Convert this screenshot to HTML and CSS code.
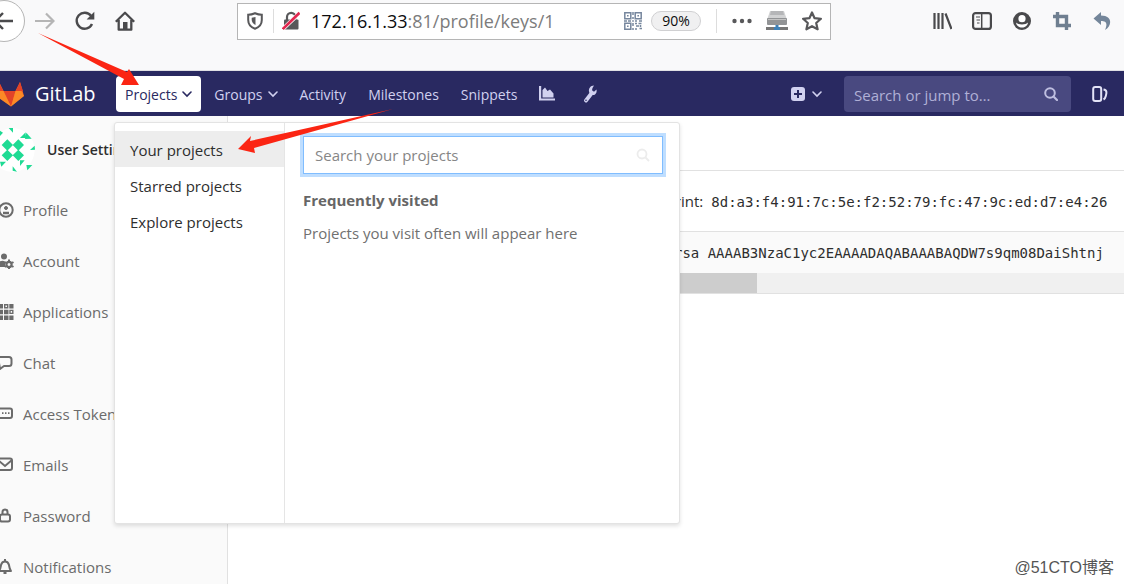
FILE: index.html
```html
<!DOCTYPE html>
<html lang="en">
<head>
<meta charset="utf-8">
<title>User Settings · GitLab</title>
<link rel="stylesheet" href="styles.css">
</head>
<body>
<header class="browser">
  <button class="tool back" aria-label="Back"><svg width="26" height="44" viewBox="0 0 26 44"><circle cx="4" cy="22" r="20.500" fill="#fff" stroke="#b5b5b5"/><path d="M-4 22H13M3 14l-8 8 8 8" fill="none" stroke="#4a4a4c" stroke-width="2.400"/></svg></button>
  <button class="tool" aria-label="Forward"><svg width="20" height="20" viewBox="0 0 20 20"><path d="M0 10h18M11 2.500l7.500 7.500-7.500 7.500" fill="none" stroke="#b5b5b5" stroke-width="2.200"/></svg></button>
  <button class="tool" aria-label="Reload"><svg width="20" height="20" viewBox="0 0 20 20"><path d="M16 4.800A8 8 0 1 0 17 13" fill="none" stroke="#4a4a4c" stroke-width="2.400"/><path d="M19.300 .8v7.700h-7.700z" fill="#4a4a4c"/></svg></button>
  <button class="tool" aria-label="Home"><svg width="20" height="20" viewBox="0 0 20 20"><path d="M.8 10.800L10 1.800l9.200 9M3.700 9v9.700h12.600V9" fill="none" stroke="#4a4a4c" stroke-width="2.300" stroke-linejoin="round"/><path d="M8 19v-8h4.500v8z" fill="#4a4a4c"/></svg></button>
  <div class="urlbar">
    <svg width="16" height="18" viewBox="0 0 16 18"><path d="M8 1.200C5.500 2.200 3 2.700 1.200 2.800V8c0 4.300 3 7.300 6.800 8.700 3.800-1.400 6.800-4.400 6.800-8.700V2.800C13 2.700 10.500 2.200 8 1.200z" fill="none" stroke="#58585a" stroke-width="2"/><path d="M8.500 5v8C6 11.800 4.700 10 4.700 7.500V5.800z" fill="#58585a"/></svg>
    <span class="sep"></span>
    <svg width="18" height="20" viewBox="0 0 18 20"><path d="M5 9V6a4.200 4.200 0 0 1 8.400 0v3" fill="none" stroke="#58585a" stroke-width="2.200"/><rect x="2" y="8.500" width="14.500" height="10" rx="1" fill="#58585a"/><path d="M.8 18L17.500 2.300" stroke="#fff" stroke-width="4"/><path d="M.8 18L17.500 1.800" stroke="#e22850" stroke-width="2.600"/></svg>
    <span class="url" role="textbox" aria-label="Address"><span class="host">172.16.1.33</span>:81/profile/keys/1</span>
    <svg class="qr" width="18" height="18" viewBox="0 0 18 18" fill="none" stroke="#76869d" stroke-width="1.500"><path d="M.8.8h6v6h-6zM11.200.8h6v6h-6zM.8 11.200h6v6h-6z"/><path d="M3 3.800h1.600M13.400 3.800H15M3 14.200h1.600M8.200 9h1.600M9 0v3M9 5v2M0 9h3M4 9h3M11 9h2M15 9h3M9 11v3M9 16v2M11 11.500h2M14.500 11.500h3M12 14h3M11 17h2M15.500 16.500h2.500M16.500 13v2"/></svg>
    <button class="zoom">90%</button>
    <span class="sep tall"></span>
    <svg class="dots" width="20" height="6" viewBox="0 0 20 6" fill="#58585a"><circle cx="2.500" cy="3" r="2.200"/><circle cx="10" cy="3" r="2.200"/><circle cx="17.500" cy="3" r="2.200"/></svg>
    <svg class="drive" width="22" height="20" viewBox="0 0 22 20"><path d="M4 0h14l3 9H1z" fill="#d1d2d3"/><path d="M5 0h12l1 4H4z" fill="#b5b6b8"/><rect x="1" y="7" width="20" height="7" rx="1" fill="#929496"/><path d="M2 8.500h18" stroke="#c4c4c4"/><path d="M0 17.500h22" stroke="#777" stroke-width="3"/><path d="M8 17.500h6M11 14v5" stroke="#3f81b7" stroke-width="3"/></svg>
    <svg class="star" width="20" height="20" viewBox="0 0 20 20"><path d="M10 1.500l2.600 5.700 6.300.6-4.700 4.200 1.400 6.300L10 15.200l-5.600 3.100L5.800 12 1.100 7.800l6.300-.6z" fill="none" stroke="#58585a" stroke-width="2.200" stroke-linejoin="round"/></svg>
  </div>
  <div class="tools">
    <button class="tool" aria-label="Library"><svg width="20" height="18" viewBox="0 0 20 18"><path d="M2.500 1v16M6.500 1v16M10.500 1v16M13.500 1.500l6 15.500" stroke="#4a4a4c" stroke-width="2.200"/></svg></button>
    <button class="tool" aria-label="Sidebars"><svg width="20" height="18" viewBox="0 0 20 18"><rect x="1.100" y="1.100" width="17.800" height="15.800" rx="2.500" fill="none" stroke="#4a4a4c" stroke-width="2.200"/><path d="M9.700 1v16" stroke="#4a4a4c" stroke-width="1.500"/><path d="M4 5h4M4.500 8H8M5 11h2.500" stroke="#4a4a4c" stroke-width="1.200"/></svg></button>
    <button class="tool" aria-label="Account"><svg width="20" height="20" viewBox="0 0 20 20"><circle cx="10" cy="10" r="9" fill="#4a4a4c"/><circle cx="10" cy="7.700" r="3.600" fill="#fff"/><path d="M4 11.500c2 2.500 10 2.500 12 0-.5 3.500-3 5-6 5s-5.500-1.500-6-5z" fill="#fff"/></svg></button>
    <button class="tool" aria-label="Crop"><svg width="20" height="20" viewBox="0 0 20 20"><path d="M1 5.500h13.500V19M5.500 1v13.500H19" fill="none" stroke="#6f7f90" stroke-width="3.400"/></svg></button>
    <button class="tool" aria-label="Undo"><svg width="20" height="20" viewBox="0 0 20 20"><path d="M9 1L1.500 7.500 9 14v-4c5 0 7 2 4 9 7-4 8-14.500-4-14.500z" fill="#74869a"/></svg></button>
  </div>
</header>

<nav class="navbar">
  <a class="brand" href="#"><svg width="25" height="26" viewBox="0 0 25 26"><path d="M-4 15L-1 1l4.500 9h12L20 1l4 14-13 10.500z" fill="#fc6d26"/><path d="M3.500 10h12L11 25.500z" fill="#e24329"/><path d="M-4 15l3-5h4.500L11 25.500zM24 15l-3-5h-5.500L11 25.500z" fill="#fca326" fill-opacity=".55"/><path d="M20 1l-4.500 9H23zM-1 1l4.500 9H-4z" fill="#e24329"/></svg><span>GitLab</span></a>
  <ul class="menu">
    <li class="item">
      <button class="link active" aria-expanded="true">Projects <svg width="10" height="7" viewBox="0 0 10 7"><path d="M1 1l4 4 4-4" fill="none" stroke="currentColor" stroke-width="1.600" stroke-linecap="round"/></svg></button>
      <div class="dropdown">
        <ul class="choices">
          <li><a class="choice current" href="#">Your projects</a></li>
          <li><a class="choice" href="#">Starred projects</a></li>
          <li><a class="choice" href="#">Explore projects</a></li>
        </ul>
        <div class="frequent">
          <div class="find"><input class="find-input" type="search" placeholder="Search your projects" aria-label="Search your projects"><svg width="14" height="14" viewBox="0 0 14 14"><circle cx="6" cy="6" r="4.500" fill="none" stroke="#ececec" stroke-width="1.800"/><path d="M9.500 9.500L13 13" stroke="#ececec" stroke-width="1.800"/></svg></div>
          <h2 class="freq-title">Frequently visited</h2>
          <p class="freq-text">Projects you visit often will appear here</p>
        </div>
      </div>
    </li>
    <li><button class="link">Groups <svg width="10" height="7" viewBox="0 0 10 7"><path d="M1 1l4 4 4-4" fill="none" stroke="currentColor" stroke-width="1.600" stroke-linecap="round"/></svg></button></li>
    <li><a class="link" href="#">Activity</a></li>
    <li><a class="link" href="#">Milestones</a></li>
    <li><a class="link" href="#">Snippets</a></li>
    <li><a class="link chart" href="#" aria-label="Statistics"><svg width="16" height="16" viewBox="0 0 16 16"><path d="M1.100 0v13.500H16" fill="none" stroke="currentColor" stroke-width="2.200"/><path d="M3.500 11.500V4L6 1.500 8.500 5l2.500-1.500 3.500 4v4z" fill="currentColor"/></svg></a></li>
    <li><a class="link wrench" href="#" aria-label="Admin"><svg width="16" height="18" viewBox="0 0 16 18"><path d="M3 15.500L8 9" stroke="currentColor" stroke-width="3.800" stroke-linecap="round"/><path d="M11 .5C7.500.5 5.500 3.500 6 6.500c.3 3 4 4.500 6 3 1.300-1 2-3 1.500-5L11 6.800 9 5.300 9.500 3z" fill="currentColor"/><circle cx="3" cy="15.300" r=".8" fill="#292961"/></svg></a></li>
  </ul>
  <div class="right">
    <button class="link new" aria-label="New"><svg width="14" height="14" viewBox="0 0 14 14"><rect width="14" height="14" rx="3" fill="currentColor"/><path d="M7 3v8M3 7h8" stroke="#292961" stroke-width="2"/></svg><svg width="10" height="7" viewBox="0 0 10 7"><path d="M1 1l4 4 4-4" fill="none" stroke="currentColor" stroke-width="1.600" stroke-linecap="round"/></svg></button>
    <div class="jump"><input class="jump-input" type="search" placeholder="Search or jump to…" aria-label="Search or jump to"><svg width="14" height="14" viewBox="0 0 14 14"><circle cx="6" cy="6" r="4.800" fill="none" stroke="#bfbfe0" stroke-width="2"/><path d="M9.500 9.500L13 13" stroke="#bfbfe0" stroke-width="2.200" stroke-linecap="round"/></svg></div>
    <a class="link issues" href="#" aria-label="Issues"><svg width="16" height="16" viewBox="0 0 16 16" fill="none" stroke="currentColor" stroke-width="2"><rect x="1.200" y="1" width="8" height="14" rx="2"/><path d="M11.500 3.500c4 .5 3 4 2.300 6.500-.4 1.800-1 2.800-2.300 3.500"/></svg></a>
  </div>
</nav>

<div class="page">
  <aside class="sidebar">
    <a class="context" href="#">
      <svg width="36" height="44" viewBox="0 0 108 132"><circle cx="38" cy="66" r="66" fill="#fff"/><path d="M22 34l17 17-17 17L5 51zM55 34l17 17-17 17-17-17zM22 65l17 17-17 17L5 82zM55 65l17 17-17 17-17-17zM26 0h13v14zM0 8l9 6-9 10zM60 30l17-17v17zM79 14l16 18-20 1zM90 66l14-13 1 12zM60 97h14l-14 17zM79 111h18l-15 16zM38 115l13 16-13-3zM0 101h18L4 116z" fill="#1fdb94"/></svg>
      <span>User Settings</span>
    </a>
    <ul class="side-list">
      <li><a class="side-link" href="#"><svg width="14" height="16" viewBox="2 0 14 16" fill="none" stroke="currentColor" stroke-width="2"><circle cx="8" cy="8" r="6.700"/><circle cx="8" cy="6" r="1.500" fill="currentColor" stroke-width="1"/><path d="M5 11h6" stroke-width="2.500"/></svg>Profile</a></li>
      <li><a class="side-link" href="#"><svg width="14" height="16" viewBox="2 0 14 16" fill="currentColor"><circle cx="6" cy="3.500" r="3"/><path d="M0 14V11c0-3 5-4 7-2.500V14z"/><circle cx="11" cy="11.500" r="2.600" fill="none" stroke="currentColor" stroke-width="2.200"/><path d="M11 6.500v2M11 14.500v2M6.700 9l1.500 1M14 13l1.500 1M6.700 14l1.500-1M14 10l1.500-1" stroke="currentColor" stroke-width="2"/></svg>Account</a></li>
      <li><a class="side-link" href="#"><svg width="14" height="16" viewBox="2 0 14 16" fill="currentColor"><path d="M0 0h5v4.500H0zM0 5.700h5v4.500H0zM0 11.500h5V16H0zM6 5.700h4.500v4.500H6zM6 11.500h4.500V16H6zM11.300 0h4.200v4.500h-4.200zM11.300 11.500h4.200V16h-4.200z"/><path d="M6.700 .7h3v3h-3zM12 6.400h2.800v3H12z" fill="none" stroke="currentColor" stroke-width="1.400"/></svg>Applications</a></li>
      <li><a class="side-link" href="#"><svg width="14" height="16" viewBox="2 0 14 16"><path d="M0 2h11q2.500 0 2.500 2.500v4q0 2.500-2.500 2.500H6l-4 3z" fill="none" stroke="currentColor" stroke-width="2" stroke-linejoin="round"/></svg>Chat</a></li>
      <li><a class="side-link" href="#"><svg width="14" height="16" viewBox="2 0 14 16"><rect x="0" y="2.500" width="14" height="9.500" rx="2" fill="none" stroke="currentColor" stroke-width="2"/><path d="M4 7.200h1.500M7 7.200h1.500M10 7.200h1.500" stroke="currentColor" stroke-width="1.700"/></svg>Access Tokens</a></li>
      <li><a class="side-link" href="#"><svg width="14" height="16" viewBox="2 0 14 16" fill="none" stroke="currentColor" stroke-width="2"><rect x="0" y="1.500" width="14" height="11.500" rx="2"/><path d="M0 3l7 6 7-6"/></svg>Emails</a></li>
      <li><a class="side-link" href="#"><svg width="14" height="16" viewBox="2 0 14 16" fill="none" stroke="currentColor" stroke-width="2"><rect x="2" y="6.500" width="10" height="7" rx="2"/><path d="M4.500 6V4a2.500 2.500 0 0 1 5 0v2"/></svg>Password</a></li>
      <li><a class="side-link" href="#"><svg width="14" height="16" viewBox="2 0 14 16" fill="none" stroke="currentColor" stroke-width="2"><path d="M1 12h12c-1.500-2-1.500-3-2-6-.5-2-2-3.500-4-3.500S3.500 4 3 6c-.5 3-.5 4-2 6zM7 0v2M5.500 14h3" stroke-linejoin="round"/></svg>Notifications</a></li>
    </ul>
  </aside>
  <main class="content">
    <section class="key">
      <p class="print">Fingerprint:<code class="hash">8d:a3:f4:91:7c:5e:f2:52:79:fc:47:9c:ed:d7:e4:26</code></p>
      <pre class="public">ssh-rsa AAAAB3NzaC1yc2EAAAADAQABAAABAQDW7s9qm08DaiShtnj</pre>
      <div class="track"><div class="thumb"></div></div>
    </section>
    <p class="mark">@51CTO博客</p>
  </main>
</div>
<svg class="arrows" width="400" height="160" viewBox="0 0 400 160" fill="#fb2513" aria-hidden="true"><path d="M38 33L127 72l2-3 10 16-18 0 3-6zM393 109L250 141l1-5-13 13 17 4-1-5z"/></svg>
</body>
</html>
```
FILE: styles.css
```css
* { box-sizing: border-box; }
body {
  margin: 0;
  display: flex;
  flex-direction: column;
  min-height: 100vh;
  overflow: hidden;
  background: #fff;
  color: #2e2e2e;
  font: 15px/20px "Open Sans", "Noto Sans", sans-serif;
}
ul { margin: 0; padding: 0; list-style: none; }
a { color: inherit; text-decoration: none; }
button { border: 0; padding: 0; background: none; color: inherit; font: inherit; }
input { font: inherit; }
svg { display: block; flex: none; }

.browser {
  display: flex;
  align-items: center;
  gap: 20px;
  height: 71px;
  padding: 0 12px 28px 0;
  background: #f9f9fa;
  border-bottom: 1px solid #e0e0e4;
}
.back { margin-right: -11px; }
.urlbar {
  flex: 1;
  display: flex;
  align-items: center;
  height: 37px;
  margin: 0 81px 0 82px;
  padding: 0 8px 0 9px;
  border: 1px solid #b5b5b5;
  background: #fff;
}
.sep { width: 1px; height: 24px; margin: 0 8px 0 10px; background: #ddd; }
.tall { margin: 0 15px; }
.url { flex: 1; margin-left: 11px; color: #7c7c7c; font-size: 18px; }
.host { color: #0c0c0d; }
.zoom {
  width: 50px;
  height: 20px;
  margin-left: 9px;
  border: 1px solid #d0d0d2;
  border-radius: 10px;
  background: #f0f0f1;
  color: #0c0c0d;
  font-size: 14px;
  line-height: 18px;
}
.drive { margin: 0 14px; }
.tools { display: flex; align-items: center; gap: 20px; }

.navbar {
  display: flex;
  align-items: center;
  height: 45px;
  background: #292961;
  color: #d1d1f0;
  font-size: 14px;
}
.brand { display: flex; align-items: center; gap: 10px; width: 116px; color: #fff; font-size: 20px; }
.menu { display: flex; gap: 4px; }
.item { position: relative; }
.link { display: flex; align-items: center; gap: 5px; height: 36px; padding: 2px 9px 0; border-radius: 4px; }
.active { background: #fff; color: #292961; }
.chart { padding-top: 0; }
.wrench { padding: 0 15px; }
.right { display: flex; align-items: center; margin-left: auto; }
.new { padding: 1px 22px 0; gap: 7px; }
.jump { display: flex; align-items: center; width: 227px; height: 36px; padding: 0 13px 0 10px; border-radius: 4px; background: #494980; }
.jump-input { flex: 1; min-width: 0; padding: 2px 0 0; border: 0; outline: 0; background: none; color: #fff; font-size: 15px; }
.jump-input::placeholder { color: #b0b0d6; opacity: 1; }
.issues { padding: 0 16px 0 21px; color: #e3e3f7; }

.dropdown {
  position: absolute;
  z-index: 2;
  top: 46px;
  left: -2px;
  display: flex;
  width: 566px;
  min-height: 402px;
  border: 1px solid #e3e3e3;
  border-radius: 3px;
  background: #fff;
  box-shadow: 0 2px 4px rgba(0, 0, 0, .12);
  color: #2e2e2e;
  font-size: 15px;
}
.choices { width: 170px; padding-top: 8px; border-right: 1px solid #e5e5e5; }
.choice { display: block; padding: 9px 15px 7px; }
.current { background: #ededed; }
.frequent { flex: 1; padding: 13px 16px 14px 18px; }
.find {
  display: flex;
  align-items: center;
  height: 38px;
  padding: 0 12px 0 11px;
  border: 1px solid #80bdff;
  box-shadow: 0 0 0 3px #bfdeff;
}
.find-input { flex: 1; min-width: 0; padding: 0; border: 0; outline: 0; background: none; }
.find-input::placeholder { color: #868686; opacity: 1; }
.freq-title { margin: 16px 0 13px; color: #666; font-size: 15px; line-height: 20px; }
.freq-text { margin: 0; color: #707070; }

.page { flex: 1; display: flex; }
.sidebar { width: 228px; padding-top: 12px; border-right: 1px solid #e1e1e1; background: #fafafa; color: #6b6b6b; }
.context { display: flex; align-items: center; gap: 11px; height: 44px; color: #2e2e2e; font-size: 14px; font-weight: 600; }
.side-list { padding-top: 12px; }
.side-link { display: flex; align-items: center; gap: 9px; height: 51px; }
.content { flex: 1; min-width: 0; display: flex; flex-direction: column; padding-top: 54px; }
.key { margin-left: 43%; border: 1px solid #e1e1e1; border-right: 0; }
.print { margin: 0; padding: 20px 8px; line-height: 20px; height: 60px; white-space: nowrap; }
.hash, .public { font-family: "DejaVu Sans Mono", monospace; font-size: 14px; }
.hash { margin-left: 8px; }
.public { margin: 0; padding: 11px 0 10px 26px; overflow: hidden; border-top: 1px solid #e1e1e1; background: #fafafa; line-height: 20px; }
.track { height: 20px; background: #f0f0f0; }
.thumb { width: 28%; height: 20px; background: #cdcdcd; }
.mark { margin: auto 10px 14px auto; color: #555; font: 16px/20px "Liberation Sans", "Noto Sans CJK SC", sans-serif; }
.arrows { position: absolute; z-index: 3; top: 0; left: 0; pointer-events: none; }
```
